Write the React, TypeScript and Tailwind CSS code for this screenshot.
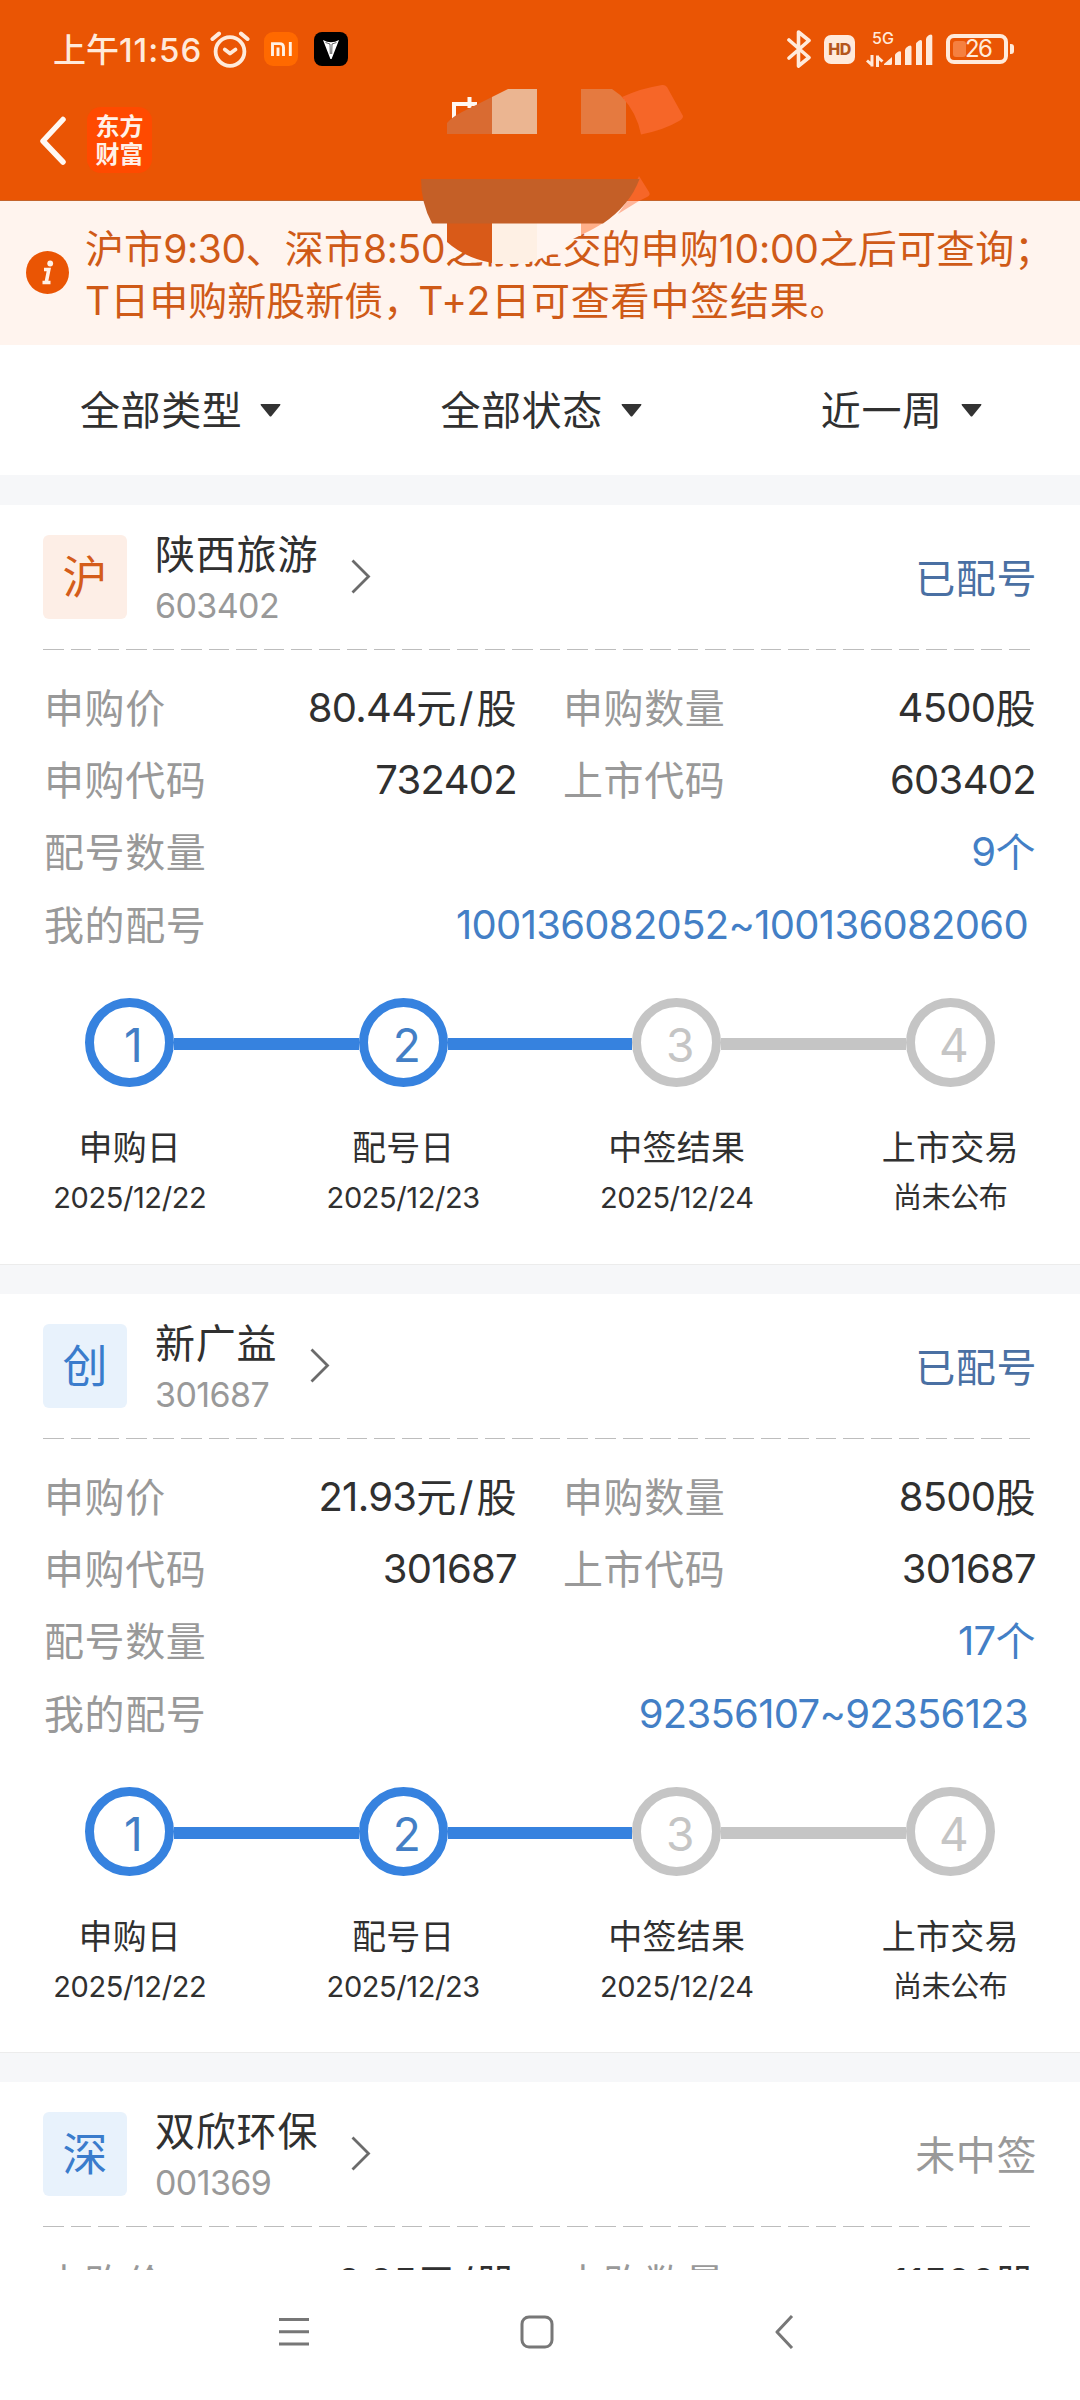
import React from "react";

/* Splits a string into CJK and Latin runs so each gets its own tracking. */
function Mix({ children }: { children: string }) {
  const runs = children.split(/([\u3000-\uffef]+|\/(?=股))/).filter(Boolean);
  return (
    <>
      {runs.map((run, i) =>
        run === "/" ? (
          <span key={i} className="ml-[2px] mr-[3px]">/</span>
        ) : /[\u3000-\uffef]/.test(run) ? (
          <span key={i} className="align-[-1px] tracking-[0.6px]">{run}</span>
        ) : (
          <span key={i} className="tracking-[-0.7px]">{run}</span>
        ),
      )}
    </>
  );
}

function StatusBar() {
  return (
    <div className="flex h-[98px] items-center justify-between pl-[53px] pr-[66px] text-[#ffeadb]">
      <div className="flex items-center">
        <span className="whitespace-nowrap pt-[2px] text-[33px] font-medium leading-[40px]">
          上午<span className="tracking-[0.9px]">11:56</span>
        </span>
        <svg className="ml-[8px]" width="40" height="37" viewBox="0 0 40 37" fill="none" stroke="currentColor" strokeWidth="3.8" strokeLinecap="round" strokeLinejoin="round">
          <circle cx="20" cy="20.5" r="14.4" />
          <path d="M2.5 8 L9 2.6 M37.5 8 L31 2.6" strokeWidth="4" />
          <path d="M14.8 18.5 L20 22.5 L25.5 18.5" />
        </svg>
        <div className="ml-[14px] flex h-[34px] w-[34px] items-center justify-center rounded-[9px] bg-[#ff6900]">
          <svg width="21" height="14" viewBox="0 0 21 14" fill="none" stroke="#fff2e6" strokeWidth="2.9">
            <path d="M1.5 14 V1.6 H8.5 Q12.5 1.6 12.5 5.5 V14 M7 5.5 V14 M19.3 0 V14" />
          </svg>
        </div>
        <div className="ml-[16px] flex h-[34px] w-[34px] items-center justify-center rounded-[8px] bg-black">
          <svg width="18" height="21" viewBox="0 0 18 21" fill="white">
            <path d="M1 1 Q5 3.2 9 3.2 Q13 3.2 17 1 L9.6 20 H8.4 Z" />
            <path d="M3.5 3.5 L8 5 L8.3 15 M14.5 3.5 L10 5 L9.7 15" stroke="#000" strokeWidth="0.6" fill="none" />
          </svg>
        </div>
      </div>
      <div className="flex items-center">
        <svg width="24" height="40" viewBox="0 0 24 40" fill="none" stroke="currentColor" strokeWidth="3.6" strokeLinecap="round" strokeLinejoin="round">
          <path d="M2 11 L22 28.5 L11.5 37 V3 L22 11.5 L2 29" />
        </svg>
        <div className="ml-[13px] flex h-[29px] w-[31px] items-center justify-center rounded-[7px] bg-[#ffeadb] text-[16px] font-extrabold leading-none tracking-[-0.6px] text-[#b5561c]">HD</div>
        <div className="ml-[11px] flex h-[36px] w-[30px] flex-col justify-between">
          <span className="ml-[6px] text-[16px] font-medium leading-[14px]">5G</span>
          <svg width="18" height="12" viewBox="0 0 18 12" fill="none" stroke="currentColor" strokeWidth="3">
            <path d="M6 0 V11.5 M6 10 L1 5.5 M11.5 12 V0.5 M11.5 2 L16.5 6.5" />
          </svg>
        </div>
        <svg className="-ml-[12px]" width="50" height="32" viewBox="0 0 50 32" fill="currentColor">
          <path d="M0 32 V31 L8 24 V30.5 Q8 32 6.5 32 Z" />
          <path d="M11 32 V22 Q11 20.5 14.5 18.5 Q17 17.5 17 19.5 V32 Z" />
          <path d="M21 32 V17 Q21 15 24.5 13 Q27.5 11.5 27.5 14 V32 Z" />
          <path d="M32 32 V11.5 Q32 9.5 35 7.5 Q38 6 38 8.5 V32 Z" />
          <path d="M42 32 V6 Q42 4 45 2 Q48.3 0.5 48.3 3 V32 Z" />
        </svg>
        <div className="ml-[12px] flex h-[30px] w-[62px] items-center rounded-[8px] border-[4px] border-current pl-[3px]">
          <div className="h-[16px] w-[13px] shrink-0 rounded-[3px] bg-[#f58040]" />
          <span className="-ml-[1px] text-[24px] leading-none tracking-[-1.6px]">26</span>
        </div>
        <div className="ml-[2px] h-[10px] w-[4px] rounded-r-[3px] bg-current" />
      </div>
    </div>
  );
}

function TitleBar() {
  return (
    <div className="flex h-[103px] items-start pl-[38px] pt-[9px]">
      <svg className="mt-[9px]" width="30" height="50" viewBox="0 0 30 50" fill="none" stroke="#fff8f2" strokeWidth="5.5" strokeLinecap="round" strokeLinejoin="round">
        <path d="M25 3.5 L5 25 L25 46" />
      </svg>
      <div className="ml-[19px] flex h-[66px] w-[65px] flex-col items-center justify-center rounded-[14px] bg-[#ff4a00] pt-[2px] text-[24px] font-bold leading-[28px] text-[#fff1e8]">
        <span>东方</span>
        <span>财富</span>
      </div>
    </div>
  );
}

/* Translucent shapes lying over the page title and the notice. */
function Sticker() {
  return (
    <svg className="absolute left-[400px] top-[80px]" width="300" height="190" viewBox="400 80 300 190">
      <path d="M454 120 V104 H477 M469.5 97 V108" stroke="#fff8f2" strokeWidth="4" fill="none" />
      <path d="M621 99 H625 V104 Z" fill="#ffd9c0" />
      <path d="M447 123 Q452 117 462 112 L492 97 V134 H447 Z" fill="#d96b32" />
      <path d="M492 97 L508 89 H537 V134 H492 Z" fill="#ebb591" />
      <path d="M581 89 H612 Q620 94 626 101 V134 H581 Z" fill="#e57a40" />
      <path d="M622 97 Q642 88 662 85 Q665 84.5 667 87 L683 116 Q683 119 679 121 Q664 130 641 134.5 Q637 113 622 97 Z" fill="#f66628" />
      <path d="M639 176 L649 192 Q651 195 647 197 L639 201 H627 Z" fill="#f66628" />
      <path d="M627 201 H639 L618 214 Z" fill="#ffb59a" />
      <path d="M492 223 H537 V260 Q528 263 515 264 H492 Z" fill="#fef0e4" />
      <path d="M537 223 H581 V235 L569 241 L563 250 H557 V252 L537 260 Z" fill="#fff5f0" />
      <path d="M447 223 H492 V263 Q465 258 447 242 Z" fill="#d95a18" />
      <path d="M581 223 H603 Q594 229 581 235 Z" fill="#ffb08a" />
      <path d="M421 179 H639.5 Q630 205 603 223.5 H432 Q421 203 421 179 Z" fill="#c45f27" />
    </svg>
  );
}

function Notice() {
  return (
    <div className="flex h-[145px] items-start border-t border-[#c4632b] bg-[#fff4ee] pl-[26px] text-[#cf5a17]">
      <svg className="mt-[50px] shrink-0" width="43" height="43" viewBox="0 0 43 43">
        <circle cx="21.5" cy="21.5" r="21.5" fill="#ea5504" />
        <circle cx="24.2" cy="12.5" r="2.9" fill="#fff1e8" />
        <path d="M18 18.5 H22.8 L20.3 31 M16.5 31.5 H24.5" fill="none" stroke="#fff1e8" strokeWidth="3.6" />
      </svg>
      <div className="ml-[16px] mt-[22px] flex flex-col whitespace-nowrap text-[39px] leading-[52px]">
        <span className="tracking-[0.1px]">
          沪市<span className="tracking-[-0.4px]">9:30</span>、深市<span className="tracking-[-0.4px]">8:50</span>之前提交的申购<span className="tracking-[-0.2px]">10:00</span>之后可查询；
        </span>
        <span>
          T日申购新股新债<span className="tracking-[-4px]">，</span>
          <span className="tracking-[0.8px]">T+2日可查看中签结果。</span>
        </span>
      </div>
    </div>
  );
}

function Filter({ label }: { label: string }) {
  return (
    <div className="flex items-center gap-[18px]">
      <span className="pt-[2px] tracking-[0.6px]">{label}</span>
      <svg width="21" height="13" viewBox="0 0 21 13" fill="#333">
        <path d="M1 0 H20 Q21 0 20 1.5 L11.5 12 Q10.5 13 9.5 12 L1 1.5 Q0 0 1 0 Z" />
      </svg>
    </div>
  );
}

type Stock = {
  mark: string;
  tone: string;
  name: string;
  code: string;
  status: string;
  statusTone: string;
  price: string;
  amount: string;
  size: string;
  draw?: { buyCode: string; count: string; numbers: string };
};

const blueMark = "bg-[#e8f2fc] text-[#3a7ccc]";
const stocks: Stock[] = [
  {
    mark: "沪", tone: "bg-[#fdeee6] text-[#d45c1a]", name: "陕西旅游", code: "603402",
    status: "已配号", statusTone: "text-[#4a70a3]", price: "80.44元/股", amount: "4500股",
    size: "h-[760px] border-b border-[#ececec]",
    draw: { buyCode: "732402", count: "9个", numbers: "100136082052~100136082060" },
  },
  {
    mark: "创", tone: blueMark, name: "新广益", code: "301687",
    status: "已配号", statusTone: "text-[#4a70a3]", price: "21.93元/股", amount: "8500股",
    size: "h-[759px] border-b border-[#ececec]",
    draw: { buyCode: "301687", count: "17个", numbers: "92356107~92356123" },
  },
  {
    mark: "深", tone: blueMark, name: "双欣环保", code: "001369",
    status: "未中签", statusTone: "text-[#999]", price: "6.85元/股", amount: "11500股",
    size: "h-[188px] overflow-hidden",
  },
];

const steps = [
  { title: "申购日", note: "2025/12/22", done: true },
  { title: "配号日", note: "2025/12/23", done: true },
  { title: "中签结果", note: "2025/12/24", done: false },
  { title: "上市交易", note: "尚未公布", done: false },
];

function Pair({ label, value }: { label: string; value: string }) {
  return (
    <div className="flex flex-1 items-center justify-between">
      <span className="text-[#999]"><Mix>{label}</Mix></span>
      <span className="text-[#303030]"><Mix>{value}</Mix></span>
    </div>
  );
}

/* Four equal cells; each draws its half of the connecting lines. */
function StepRow() {
  return (
    <div className="-ml-[7px] mt-[37px] grid grid-cols-[273.5px_273.5px_273.5px_273.5px]">
      {steps.map((s, i) => (
        <div key={s.title} className="flex flex-col items-center">
          <div className="flex h-[89px] w-full items-center">
            <div className={`mt-[3px] h-[12px] flex-1 ${i === 0 ? "bg-transparent" : i < 3 ? "bg-[#3682df]" : "bg-[#c5c5c5]"}`} />
            <div className={`flex h-[89px] w-[89px] items-center justify-center rounded-full border-[9px] bg-white pl-[7px] pt-[5px] text-[46px] leading-none ${s.done ? "border-[#3682df] text-[#437fc6]" : "border-[#c5c5c5] text-[#c5c5c5]"}`}>
              {i + 1}
            </div>
            <div className={`mt-[3px] h-[12px] flex-1 ${i === 3 ? "bg-transparent" : i < 2 ? "bg-[#3682df]" : "bg-[#c5c5c5]"}`} />
          </div>
          <span className="mt-[38px] whitespace-nowrap text-[34px] leading-[46px] tracking-[0.2px] text-[#303030]">{s.title}</span>
          <span className="mt-[4px] whitespace-nowrap text-[29px] leading-[46px] tracking-[-0.4px] text-[#303030]">{s.note}</span>
        </div>
      ))}
    </div>
  );
}

function Card({ stock }: { stock: Stock }) {
  const { draw } = stock;
  return (
    <section className={`flex shrink-0 flex-col bg-white ${stock.size}`}>
      <div className="flex h-[144px] shrink-0 items-start pl-[43px] pr-[43px] pt-[30px]">
        <div className={`flex h-[84px] w-[84px] items-center justify-center rounded-[6px] text-[45px] leading-none ${stock.tone}`}>{stock.mark}</div>
        <div className="ml-[28px] flex flex-col whitespace-nowrap">
          <span className="-mt-[8px] text-[40px] leading-[56px] tracking-[0.8px] text-[#303030]">{stock.name}</span>
          <span className="-mt-[2px] text-[34px] leading-[50px] tracking-[-0.6px] text-[#999]">{stock.code}</span>
        </div>
        <svg className="ml-[33px] mt-[23px]" width="21" height="36" viewBox="0 0 21 36" fill="none" stroke="#6b6b6b" strokeWidth="2.8">
          <path d="M1.5 2.5 L17.5 18.5 L1.5 34.5" />
        </svg>
        <span className={`ml-auto mt-[16px] whitespace-nowrap text-[40px] leading-[56px] tracking-[0.6px] ${stock.statusTone}`}>{stock.status}</span>
      </div>
      <div className="ml-[43px] h-px w-[987px] shrink-0 bg-[repeating-linear-gradient(90deg,#bdbdbd_0,#bdbdbd_20.7px,transparent_20.7px,transparent_27.6px)]" />
      <div className={`flex shrink-0 flex-col whitespace-nowrap px-[44px] text-[40px] leading-[56px] ${draw ? "mt-[22px]" : "mt-[20px]"}`}>
        <div className="flex h-[72.3px] items-center gap-[46px]">
          <Pair label="申购价" value={stock.price} />
          <Pair label="申购数量" value={stock.amount} />
        </div>
        {draw && (
          <>
            <div className="flex h-[72.3px] items-center gap-[46px]">
              <Pair label="申购代码" value={draw.buyCode} />
              <Pair label="上市代码" value={stock.code} />
            </div>
            <div className="flex h-[72.3px] items-center justify-between">
              <span className="text-[#999]"><Mix>配号数量</Mix></span>
              <span className="text-[#437fc6]"><Mix>{draw.count}</Mix></span>
            </div>
            <div className="flex h-[72.3px] items-center justify-between">
              <span className="text-[#999]"><Mix>我的配号</Mix></span>
              <span className="pr-[8px] text-[#437fc6]"><Mix>{draw.numbers}</Mix></span>
            </div>
          </>
        )}
      </div>
      {draw && <StepRow />}
    </section>
  );
}

function NavBar() {
  return (
    <nav className="flex h-[130px] shrink-0 items-start bg-white pl-[279px] pt-[45px]">
      <svg width="30" height="34" viewBox="0 0 30 34" stroke="#777" strokeWidth="3" fill="none">
        <path d="M0 4.5 H30 M0 16.8 H30 M0 29 H30" />
      </svg>
      <svg className="ml-[210px]" width="36" height="34" viewBox="0 0 36 34" stroke="#777" strokeWidth="3" fill="none">
        <rect x="3" y="2" width="30" height="30" rx="7" />
      </svg>
      <svg className="ml-[219px]" width="20" height="34" viewBox="0 0 20 34" stroke="#777" strokeWidth="3" fill="none">
        <path d="M18 1 L3 17 L18 33" strokeLinejoin="round" />
      </svg>
    </nav>
  );
}

export default function App() {
  return (
    <div className="relative flex h-[2400px] w-[1080px] flex-col overflow-hidden bg-[#f6f7f9] font-['Inter','Noto_Sans_CJK_SC',sans-serif]">
      <header className="h-[200px] shrink-0 bg-[#ea5504]">
        <StatusBar />
        <TitleBar />
      </header>
      <Notice />
      <div className="flex h-[130px] shrink-0 items-center bg-white pl-[80px] text-[40px] leading-[56px] text-[#303030]">
        <Filter label="全部类型" />
        <div className="ml-[159px]"><Filter label="全部状态" /></div>
        <div className="ml-[179px]"><Filter label="近一周" /></div>
      </div>
      <main className="flex h-[1795px] shrink-0 flex-col gap-[29px] overflow-hidden pt-[30px]">
        {stocks.map((s) => (
          <Card key={s.code} stock={s} />
        ))}
      </main>
      <NavBar />
      <Sticker />
    </div>
  );
}
